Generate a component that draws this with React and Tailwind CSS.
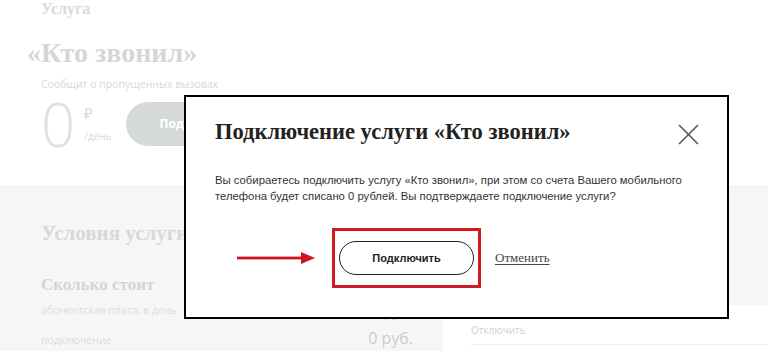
const serif = { fontFamily: '"Liberation Serif", "DejaVu Serif", serif' };

export default function App() {
  return (
    <div className="relative w-[768px] h-[351px] overflow-hidden bg-white font-['Open_Sans',sans-serif]">
      {/* Faded page behind the dialog */}
      <div className="h-[185px] pl-[41px] pt-px text-[#dcdcdc]">
        <p style={serif} className="font-bold text-[16px] leading-[16px] text-[#dadada]">Услуга</p>
        <h1 style={serif} className="-ml-[14px] mt-[22px] font-bold text-[28px] leading-[28px] text-[#d6d6d6]">«Кто звонил»</h1>
        <p className="mt-[11px] text-[10.5px] leading-[12px] text-[#d8d8d8]">Сообщит о пропущенных вызовах</p>
        <div className="mt-[8px] flex items-center h-[52px]">
          <span className="font-['Open_Sans',sans-serif] font-light text-[60px] leading-[52px] text-[#e0e0e0]">0</span>
          <div className="ml-[9px] flex flex-col text-[#d8d8d8]">
            <span className="text-[15px] leading-[16px]">₽</span>
            <span className="text-[10px] leading-[14px] mt-[8px]">/день</span>
          </div>
          <div className="ml-[14px] h-[44px] w-[130px] rounded-full bg-[#d6d9d9] pl-[34px] flex items-center text-white font-bold text-[12px]">Подк</div>
        </div>
      </div>
      <div className="flex h-[166px] bg-[#f6f6f7]">
        <div className="w-[443px] pl-[41px] pt-[36px] text-[#dcdcdc]">
          <p style={serif} className="font-bold text-[21px] leading-[24px] text-[#d8d8d8]">Условия услуги</p>
          <p style={serif} className="mt-[30px] font-bold text-[17px] leading-[20px] text-[#d4d4d4]">Сколько стоит</p>
          <div className="mt-[8px] flex justify-between pr-[30px] text-[10.5px] leading-[14px]">
            <span>абонентская плата, в день</span>
            <span className="text-[15px] text-[#cfcfcf]">0 руб.</span>
          </div>
          <div className="mt-[12px] flex justify-between items-baseline pr-[30px] text-[10.5px] leading-[14px]">
            <span>подключение</span>
            <span className="text-[16px] leading-[18px] text-[#cccccc]">0 руб.</span>
          </div>
        </div>
        <div className="flex-1 flex flex-col justify-end">
          <div className="bg-white h-[46px] pl-[28px] pt-[18px]">
            <p className="text-[10px] leading-[14px] text-[#d0d0d0]">Отключить</p>
            <div className="mt-[7px] h-px bg-[#eeeeee]" />
          </div>
        </div>
      </div>

      {/* Dialog */}
      <div className="absolute left-[184px] top-[95px] w-[545px] h-[224px] border-2 border-black bg-white pl-[29px] pr-[28px] pt-[22px]">
        <div className="flex items-start justify-between">
          <h2 style={serif} className="font-bold text-[22.5px] leading-[26px] text-[#222]">Подключение услуги «Кто звонил»</h2>
          <svg viewBox="0 0 20 20" className="mt-[5px] h-[21px] w-[21px]" fill="none" stroke="#555" strokeWidth="1.5">
            <path d="M1 1L19 19M19 1L1 19" />
          </svg>
        </div>
        <p className="mt-[27px] whitespace-nowrap text-[11.3px] leading-[16px] text-[#333] font-['Liberation_Sans',sans-serif]">
          Вы собираетесь подключить услугу «Кто звонил», при этом со счета Вашего мобильного<br />
          телефона будет списано 0 рублей. Вы подтверждаете подключение услуги?
        </p>
        <div className="mt-[24px] flex items-center">
          <svg viewBox="0 0 78 12" className="ml-[22px] h-[12px] w-[78px]" fill="#d0151e">
            <rect x="0" y="4.6" width="66" height="2.8" />
            <path d="M64 0L78 6L64 12Z" />
          </svg>
          <div className="ml-[17px] border-[3px] border-[#cf1b22] w-[149px] h-[60px] flex items-center justify-center">
            <div className="w-[135px] h-[34px] rounded-full border-[1.5px] border-[#222] flex items-center justify-center text-[11px] font-bold text-[#222] font-['Liberation_Sans',sans-serif]">Подключить</div>
          </div>
          <span style={serif} className="ml-[14px] text-[13px] underline text-[#444] underline-offset-2">Отменить</span>
        </div>
      </div>
    </div>
  );
}
